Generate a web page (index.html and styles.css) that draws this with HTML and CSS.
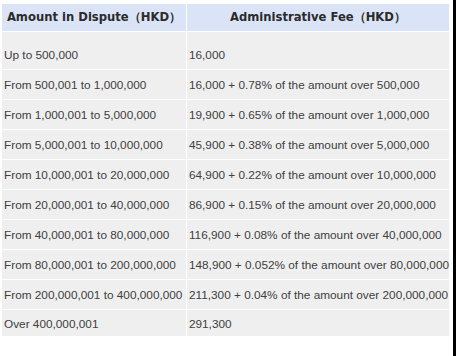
FILE: index.html
```html
<!DOCTYPE html>
<html>
<head>
<meta charset="utf-8">
<link rel="stylesheet" href="styles.css">
</head>
<body>
<div class="page">
  <div class="content">
    <table class="fees">
      <thead>
        <tr><th class="c1">Amount in Dispute（HKD）</th><th class="c2">Administrative Fee（HKD）</th></tr>
      </thead>
      <tbody>
        <tr class="first"><td>Up to 500,000</td><td>16,000</td></tr>
        <tr><td>From 500,001 to 1,000,000</td><td>16,000 + 0.78% of the amount over 500,000</td></tr>
        <tr><td>From 1,000,001 to 5,000,000</td><td>19,900 + 0.65% of the amount over 1,000,000</td></tr>
        <tr><td>From 5,000,001 to 10,000,000</td><td>45,900 + 0.38% of the amount over 5,000,000</td></tr>
        <tr><td>From 10,000,001 to 20,000,000</td><td>64,900 + 0.22% of the amount over 10,000,000</td></tr>
        <tr><td>From 20,000,001 to 40,000,000</td><td>86,900 + 0.15% of the amount over 20,000,000</td></tr>
        <tr><td>From 40,000,001 to 80,000,000</td><td>116,900 + 0.08% of the amount over 40,000,000</td></tr>
        <tr><td>From 80,000,001 to 200,000,000</td><td>148,900 + 0.052% of the amount over 80,000,000</td></tr>
        <tr><td>From 200,000,001 to 400,000,000</td><td>211,300 + 0.04% of the amount over 200,000,000</td></tr>
        <tr class="last"><td>Over 400,000,001</td><td>291,300</td></tr>
      </tbody>
    </table>
  </div>
  <div class="edge"></div>
</div>
</body>
</html>
```

FILE: styles.css
```css
html, body {
  margin: 0;
  padding: 0;
  background: #fff;
}
.page {
  display: flex;
  width: 456px;
  height: 356px;
}
.content {
  flex: 1;
  padding: 3px 0 0 1px;
}
.edge {
  width: 3px;
  background: #000;
}
.fees {
  border-collapse: separate;
  border-spacing: 1px;
  width: 449px;
  font-family: "Liberation Sans", Arial, sans-serif;
  font-size: 11.8px;
  color: #404040;
}
.fees th {
  background: #dbe4f7;
  font-family: "DejaVu Sans", Verdana, sans-serif;
  font-weight: bold;
  font-size: 11.6px;
  color: #2b2b2b;
  height: 27px;
  padding: 0;
  text-align: center;
  vertical-align: middle;
}
.fees th.c1 {
  width: 184px;
}
.fees td {
  background: #efefef;
  height: 29px;
  padding: 0 0 0 2px;
  vertical-align: middle;
  white-space: nowrap;
}
.fees tr.first td {
  height: 29px;
  padding-top: 8px;
}
.fees tr.last td {
  height: 24px;
  padding-top: 2px;
}
```
